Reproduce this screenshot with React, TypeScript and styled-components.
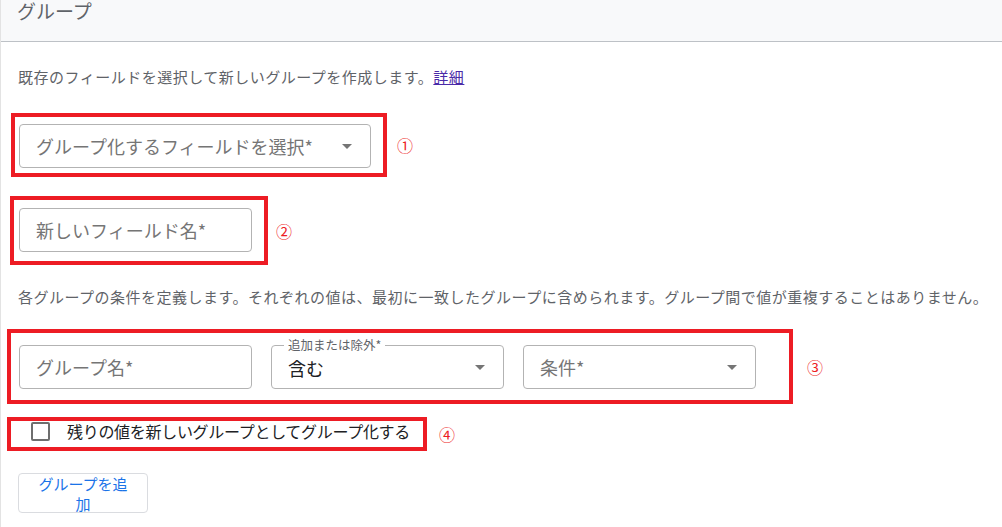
import React from 'react';
import styled, { createGlobalStyle } from 'styled-components';

const GlobalStyle = createGlobalStyle`
  html, body {
    margin: 0;
    padding: 0;
    background: #ffffff;
  }
  body {
    font-family: "Noto Sans CJK JP", "Noto Sans", sans-serif;
    color: #202124;
  }
`;

const Page = styled.div`
  width: 1002px;
  height: 527px;
  overflow: hidden;
  box-sizing: border-box;
  border-left: 1px solid #e3e3e3;
`;

const Header = styled.header`
  height: 41px;
  background: #f8f9fa;
  border-bottom: 1px solid #bdc1c6;
  padding-left: 16px;
`;

const Title = styled.h1`
  margin: 0;
  font-size: 19px;
  line-height: 22px;
  font-weight: 400;
  color: #5f6368;
`;

const Body = styled.main`
  padding-left: 17px;
  display: flex;
  flex-direction: column;
  align-items: flex-start;
`;

const Description = styled.p<{ $top: number }>`
  margin: ${({ $top }) => $top}px 0 0;
  font-size: 15px;
  line-height: 20px;
  letter-spacing: 0.5px;
  color: #5f6368;
  white-space: nowrap;
`;

const DetailLink = styled.a`
  color: #4a2aa8;
  text-decoration: underline;
`;

const MarkRow = styled.div<{ $top: number; $gap: number }>`
  display: flex;
  align-items: center;
  gap: ${({ $gap }) => $gap}px;
  margin-top: ${({ $top }) => $top}px;
`;

// red annotation frame drawn around a control
const Mark = styled.div<{ $left: number; $pad: string }>`
  display: flex;
  align-items: flex-start;
  border: 4px solid #ed1c24;
  padding: ${({ $pad }) => $pad};
  margin-left: -${({ $left }) => $left}px;
`;

const MarkNumber = styled.span`
  color: #ed1c24;
  font-size: 16px;
  line-height: 20px;
`;

const FieldGroup = styled.div`
  display: flex;
  gap: 19px;
`;

const Field = styled.div<{ $width: number }>`
  position: relative;
  box-sizing: border-box;
  width: ${({ $width }) => $width}px;
  height: 44px;
  border: 1px solid #b3b3b3;
  border-radius: 4px;
  padding: 0 16px;
  display: flex;
  align-items: center;
  justify-content: space-between;
  font-size: 18px;
`;

const Placeholder = styled.span`
  color: #757575;
  white-space: nowrap;
`;

const Value = styled.span`
  color: #202124;
  padding-top: 2px;
`;

const FloatLabel = styled.span`
  position: absolute;
  left: 12px;
  top: -9px;
  padding: 0 4px;
  background: #ffffff;
  font-size: 12.5px;
  line-height: 16px;
  color: #5f6368;
  white-space: nowrap;
`;

const Arrow = styled.span`
  width: 0;
  height: 0;
  border-left: 5px solid transparent;
  border-right: 5px solid transparent;
  border-top: 5px solid #757575;
  margin-right: 2px;
`;

const CheckRow = styled.label`
  display: flex;
  align-items: center;
  gap: 17px;
  font-size: 16px;
  line-height: 20px;
  letter-spacing: -0.3px;
  color: #202124;
  white-space: nowrap;
`;

const CheckBox = styled.span`
  box-sizing: border-box;
  width: 19px;
  height: 19px;
  border: 2px solid #6e6e6e;
  border-radius: 2px;
`;

const AddButton = styled.button`
  margin-top: 22px;
  box-sizing: border-box;
  width: 130px;
  height: 40px;
  padding: 0 14px;
  border: 1px solid #dadce0;
  border-radius: 4px;
  background: #ffffff;
  color: #1a73e8;
  font-family: inherit;
  font-size: 15px;
  line-height: 20px;
  overflow: visible;
`;

const SelectField = ({ width, text }: { width: number; text: string }) => (
  <Field $width={width}>
    <Placeholder>{text}</Placeholder>
    <Arrow />
  </Field>
);

const App = () => (
  <Page>
    <GlobalStyle />
    <Header>
      <Title>グループ</Title>
    </Header>
    <Body>
      <Description $top={25}>
        既存のフィールドを選択して新しいグループを作成します。
        <DetailLink href="#">詳細</DetailLink>
      </Description>

      <MarkRow $top={26} $gap={10}>
        <Mark $left={7} $pad="7px 12px 5px 4px">
          <SelectField width={352} text="グループ化するフィールドを選択*" />
        </Mark>
        <MarkNumber>①</MarkNumber>
      </MarkRow>

      <MarkRow $top={19} $gap={8}>
        <Mark $left={8} $pad="8px 12px 9px 5px">
          <Field $width={233}>
            <Placeholder>新しいフィールド名*</Placeholder>
          </Field>
        </Mark>
        <MarkNumber>②</MarkNumber>
      </MarkRow>

      <Description $top={22}>
        各グループの条件を定義します。それぞれの値は、最初に一致したグループに含められます。グループ間で値が重複することはありません。
      </Description>

      <MarkRow $top={22} $gap={14}>
        <Mark $left={11} $pad="12px 33px 11px 8px">
          <FieldGroup>
            <Field $width={233}>
              <Placeholder>グループ名*</Placeholder>
            </Field>
            <Field $width={233}>
              <FloatLabel>追加または除外*</FloatLabel>
              <Value>含む</Value>
              <Arrow />
            </Field>
            <SelectField width={233} text="条件*" />
          </FieldGroup>
        </Mark>
        <MarkNumber>③</MarkNumber>
      </MarkRow>

      <MarkRow $top={13} $gap={12}>
        <Mark $left={11} $pad="0 13px 6px 20px">
          <CheckRow>
            <CheckBox />
            残りの値を新しいグループとしてグループ化する
          </CheckRow>
        </Mark>
        <MarkNumber>④</MarkNumber>
      </MarkRow>

      <AddButton>グループを追加</AddButton>
    </Body>
  </Page>
);

export default App;
